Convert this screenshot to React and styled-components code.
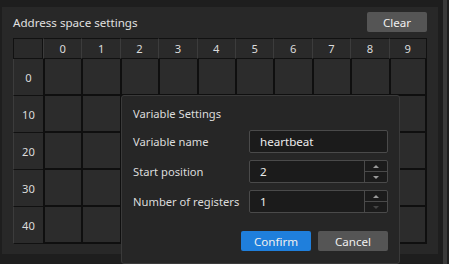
import React from 'react'
import styled, { createGlobalStyle } from 'styled-components'

const Global = createGlobalStyle`
  html, body {
    margin: 0;
    padding: 0;
    background: #1e1e1e;
  }
  * {
    box-sizing: border-box;
  }
`

const Screen = styled.div`
  position: relative;
  width: 449px;
  height: 264px;
  overflow: hidden;
  background: #1e1e1e;
  font-family: "Noto Sans", "Open Sans", sans-serif;
  font-size: 11.2px;
  color: #dcdcdc;
  display: flex;
  padding: 7px 2px 0 2px;
  gap: 5px;
`

const Panel = styled.div`
  width: 436px;
  height: 247px;
  background: #282828;
  padding: 5px 11px 0 11px;
  display: flex;
  flex-direction: column;
`

const Scrollbar = styled.div`
  width: 4px;
  margin-top: -7px;
  height: 264px;
  background: #3a3a3a;
`

const TitleRow = styled.div`
  display: flex;
  align-items: center;
  justify-content: space-between;
  height: 20px;
  margin-bottom: 6px;
`

const Title = styled.div`
  font-size: 11.6px;
  color: #e0e0e0;
`

const Button = styled.button`
  font-family: inherit;
  font-size: 11.6px;
  height: 20px;
  width: ${p => p.$width || 70}px;
  border: none;
  border-radius: 2px;
  padding: 0;
  color: #f0f0f0;
  background: ${p => (p.$primary ? '#1f7fdc' : '#555555')};
`

const Grid = styled.div`
  display: grid;
  grid-template-columns: 30px repeat(10, 1fr);
  grid-template-rows: 21px repeat(5, 37px);
  width: 414px;
`

const Corner = styled.div`
  border: 1px solid #111;
  background: #2a2a2a;
`

const HeadCell = styled.div`
  display: flex;
  align-items: center;
  justify-content: center;
  background: #2a2a2a;
  border-top: 1px solid #111;
  border-left: 1px solid #3c3c3c;
  border-bottom: 1px solid #111;
  ${p => p.$last && 'border-right: 1px solid #111;'}
`

const RowHead = styled.div`
  display: flex;
  align-items: center;
  justify-content: center;
  background: #2b2b2b;
  border-left: 1px solid #3c3c3c;
  border-bottom: 1px solid #111;
`

const Cell = styled.div`
  background: #2c2c2c;
  border-left: 2px solid #0f0f0f;
  border-bottom: 2px solid #0f0f0f;
  ${p => p.$last && 'border-right: 2px solid #0f0f0f;'}
`

const Dialog = styled.div`
  position: absolute;
  left: 121px;
  top: 95px;
  width: 279px;
  height: 169px;
  background: #262626;
  border: 1px solid #3a3a3a;
  border-radius: 3px;
  padding: 8px 11px 0 11px;
  display: flex;
  flex-direction: column;
`

const DialogTitle = styled.div`
  height: 20px;
  line-height: 20px;
  margin-bottom: 6px;
`

const Field = styled.div`
  display: grid;
  grid-template-columns: 116px 139px;
  align-items: center;
  height: 23px;
  margin-bottom: 7px;
`

const InputBox = styled.div`
  height: 23px;
  border: 1px solid #4a4a4a;
  border-radius: 2px;
  background: #1b1b1b;
  display: flex;
  align-items: stretch;
`

const Value = styled.div`
  flex: 1;
  display: flex;
  align-items: center;
  padding-left: 10px;
  font-size: 11.6px;
  color: #ececec;
`

const Spin = styled.div`
  width: 23px;
  border-left: 1px solid #4a4a4a;
  display: flex;
  flex-direction: column;
`

const SpinHalf = styled.div`
  flex: 1;
  display: flex;
  align-items: center;
  justify-content: center;
  & + & {
    border-top: 1px solid #4a4a4a;
  }
`

const Arrow = styled.div`
  width: 0;
  height: 0;
  border-left: 3px solid transparent;
  border-right: 3px solid transparent;
  ${p => (p.$down ? 'border-top' : 'border-bottom')}: 3px solid ${p => (p.$dim ? '#444' : '#9a9a9a')};
`

const Actions = styled.div`
  display: flex;
  justify-content: flex-end;
  gap: 7px;
  margin-top: 11px;
`

function SpinInput({ value, downDisabled }) {
  return (
    <InputBox>
      <Value>{value}</Value>
      <Spin>
        <SpinHalf><Arrow /></SpinHalf>
        <SpinHalf><Arrow $down $dim={downDisabled} /></SpinHalf>
      </Spin>
    </InputBox>
  )
}

const cols = [0, 1, 2, 3, 4, 5, 6, 7, 8, 9]
const rows = [0, 10, 20, 30, 40]

export default function App() {
  return (
    <Screen>
      <Global />
      <Panel>
        <TitleRow>
          <Title>Address space settings</Title>
          <Button $width={60}>Clear</Button>
        </TitleRow>
        <Grid>
          <Corner />
          {cols.map(c => (
            <HeadCell key={c} $last={c === 9}>{c}</HeadCell>
          ))}
          {rows.map(r => (
            <React.Fragment key={r}>
              <RowHead>{r}</RowHead>
              {cols.map(c => (
                <Cell key={c} $last={c === 9} />
              ))}
            </React.Fragment>
          ))}
        </Grid>
      </Panel>
      <Scrollbar />
      <Dialog>
        <DialogTitle>Variable Settings</DialogTitle>
        <Field>
          <span>Variable name</span>
          <InputBox><Value>heartbeat</Value></InputBox>
        </Field>
        <Field>
          <span>Start position</span>
          <SpinInput value="2" />
        </Field>
        <Field>
          <span>Number of registers</span>
          <SpinInput value="1" downDisabled />
        </Field>
        <Actions>
          <Button $primary>Confirm</Button>
          <Button>Cancel</Button>
        </Actions>
      </Dialog>
    </Screen>
  )
}
